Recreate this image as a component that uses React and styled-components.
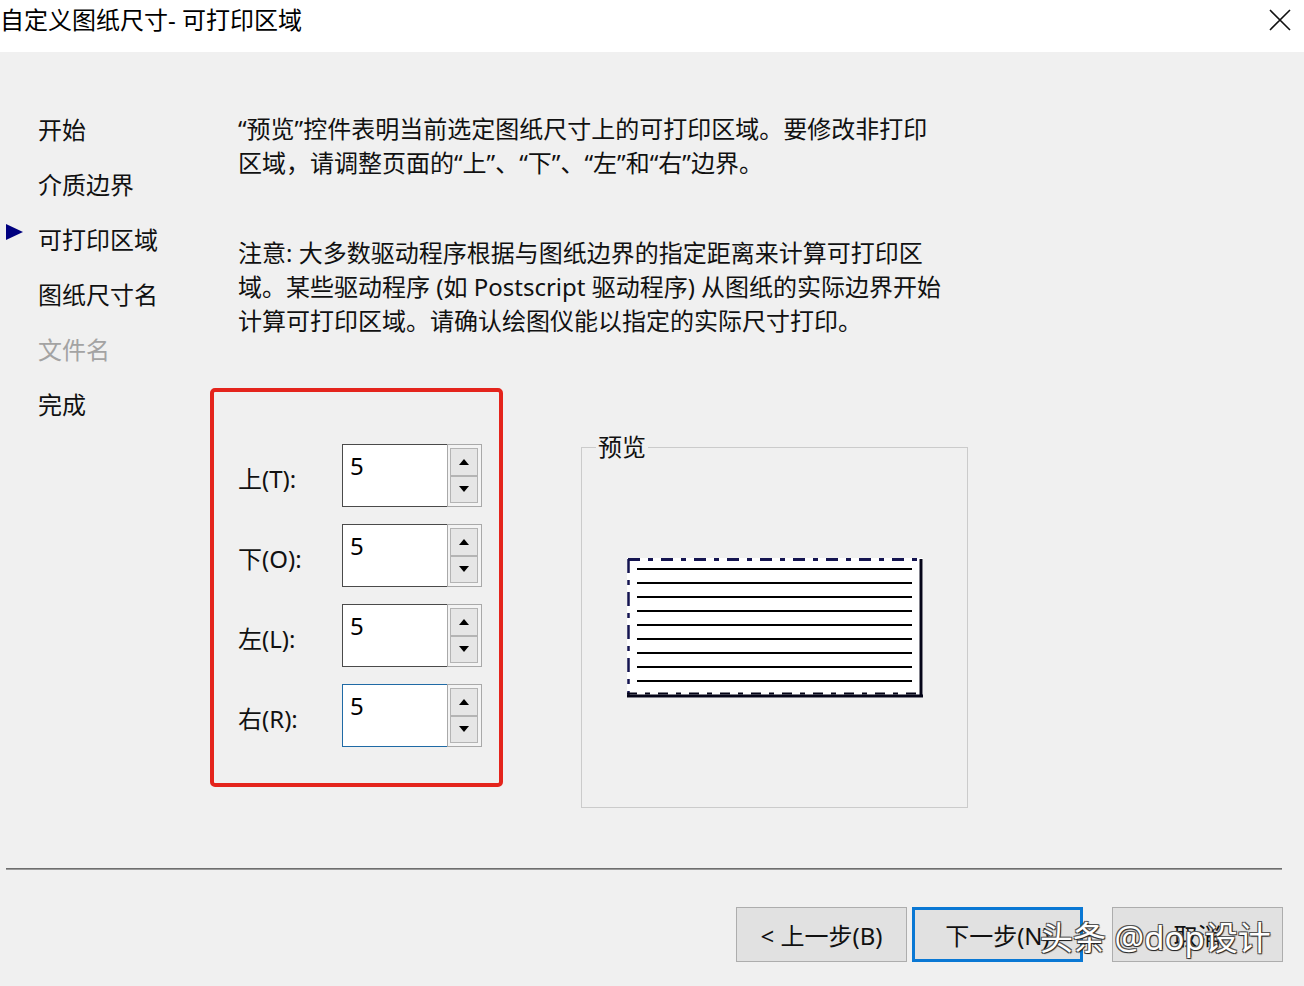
import React from "react";
import styled, { createGlobalStyle } from "styled-components";

const GlobalStyle = createGlobalStyle`
  html, body {
    margin: 0;
    padding: 0;
    background: #f0f0f0;
  }
  * {
    box-sizing: border-box;
  }
`;

const FONT = `"Noto Sans", "Noto Sans CJK SC", sans-serif`;

const steps = [
  { label: "开始" },
  { label: "介质边界" },
  { label: "可打印区域", current: true },
  { label: "图纸尺寸名" },
  { label: "文件名", disabled: true },
  { label: "完成" },
];

const margins = [
  { label: "上(T):", value: "5" },
  { label: "下(O):", value: "5" },
  { label: "左(L):", value: "5" },
  { label: "右(R):", value: "5", focused: true },
];

function PaperPreview() {
  const lines = Array.from({ length: 9 }, (_, i) => 11 + i * 14);
  return (
    <svg width="296" height="140" viewBox="0 0 296 140">
      <rect x="0" y="0" width="296" height="140" fill="#fff" />
      {lines.map((y) => (
        <line key={y} x1="10" x2="285" y1={y} y2={y} stroke="#000" strokeWidth="2" />
      ))}
      <line x1="1" y1="1.5" x2="295" y2="1.5" stroke="#141450" strokeWidth="3" strokeDasharray="12 8 5 8" />
      <line x1="1.5" y1="1" x2="1.5" y2="139" stroke="#141450" strokeWidth="2.5" strokeDasharray="14 7 5 7" />
      <line x1="294" y1="1" x2="294" y2="139" stroke="#050518" strokeWidth="3" />
      <line x1="0" y1="138" x2="296" y2="138" stroke="#050518" strokeWidth="3" />
      <line x1="0" y1="135.5" x2="296" y2="135.5" stroke="#050518" strokeWidth="2" strokeDasharray="10 8 5 8" />
    </svg>
  );
}

function Spinner() {
  return (
    <SpinBox>
      <SpinButton>
        <svg width="10" height="6" viewBox="0 0 10 6">
          <path d="M0 6 L5 0 L10 6 Z" fill="#000" />
        </svg>
      </SpinButton>
      <SpinButton>
        <svg width="10" height="6" viewBox="0 0 10 6">
          <path d="M0 0 L10 0 L5 6 Z" fill="#000" />
        </svg>
      </SpinButton>
    </SpinBox>
  );
}

export default function App() {
  return (
    <>
      <GlobalStyle />
      <Window>
        <TitleBar>
          <Title>自定义图纸尺寸- 可打印区域</Title>
          <CloseButton aria-label="close">
            <svg width="22" height="22" viewBox="0 0 22 22">
              <path d="M1 1 L21 21 M21 1 L1 21" stroke="#111" strokeWidth="1.6" />
            </svg>
          </CloseButton>
        </TitleBar>

        <Main>
          <Nav>
            {steps.map((s) => (
              <NavItem key={s.label} $disabled={s.disabled}>
                <Marker>{s.current && <Arrow />}</Marker>
                {s.label}
              </NavItem>
            ))}
          </Nav>

          <Content>
            <Para>
              “预览”控件表明当前选定图纸尺寸上的可打印区域。要修改非打印
              <br />
              区域，请调整页面的“上”、“下”、“左”和“右”边界。
            </Para>
            <Para $top={56}>
              注意: 大多数驱动程序根据与图纸边界的指定距离来计算可打印区
              <br />
              域。某些驱动程序 (如 Postscript 驱动程序) 从图纸的实际边界开始
              <br />
              计算可打印区域。请确认绘图仪能以指定的实际尺寸打印。
            </Para>

            <Controls>
              <MarginBox>
                {margins.map((m) => (
                  <MarginRow key={m.label}>
                    <MarginLabel>{m.label}</MarginLabel>
                    <Field>
                      <FieldInput $focused={m.focused}>{m.value}</FieldInput>
                      <Spinner />
                    </Field>
                  </MarginRow>
                ))}
              </MarginBox>

              <Preview>
                <Legend>预览</Legend>
                <PreviewArea>
                  <PaperPreview />
                </PreviewArea>
              </Preview>
            </Controls>
          </Content>
        </Main>

        <Separator />

        <Footer>
          <Button>&lt; 上一步(B)</Button>
          <Button $primary>下一步(N)</Button>
          <Button $spaced>取消</Button>
          <Watermark>头条 @dop设计</Watermark>
        </Footer>
      </Window>
    </>
  );
}

const Window = styled.div`
  width: 100%;
  height: 100vh;
  display: flex;
  flex-direction: column;
  font-family: ${FONT};
  color: #111;
  background: #f0f0f0;
  overflow: hidden;
`;

const TitleBar = styled.div`
  height: 52px;
  flex: none;
  background: #fff;
  display: flex;
  align-items: flex-start;
  justify-content: space-between;
`;

const Title = styled.div`
  font-size: 24px;
  line-height: 40px;
  color: #000;
`;

const CloseButton = styled.div`
  width: 22px;
  height: 22px;
  margin: 9px 13px 0 0;
  display: flex;
`;

const Main = styled.div`
  flex: 1;
  display: flex;
  min-height: 0;
`;

const Nav = styled.div`
  width: 210px;
  flex: none;
  padding-top: 50px;
  display: flex;
  flex-direction: column;
`;

const NavItem = styled.div`
  display: flex;
  align-items: flex-start;
  font-size: 24px;
  line-height: 55px;
  height: 55px;
  color: ${(p) => (p.$disabled ? "#a3a3a3" : "#111")};
`;

const Marker = styled.div`
  width: 38px;
  flex: none;
  padding-left: 6px;
  padding-top: 12px;
`;

const Arrow = styled.div`
  width: 0;
  height: 0;
  border-left: 17px solid #00007f;
  border-top: 8px solid transparent;
  border-bottom: 8px solid transparent;
`;

const Content = styled.div`
  flex: 1;
  padding-top: 60px;
  display: flex;
  flex-direction: column;
`;

const Para = styled.p`
  margin: ${(p) => p.$top || 0}px 0 0 28px;
  font-size: 24px;
  line-height: 34px;
  color: #111;
  white-space: nowrap;
`;

const Controls = styled.div`
  display: flex;
  align-items: flex-start;
  margin-top: 50px;
`;

const MarginBox = styled.div`
  width: 293px;
  height: 399px;
  border: 4px solid #e4241c;
  border-radius: 5px;
  padding: 52px 0 0 24px;
  display: flex;
  flex-direction: column;
  gap: 17px;
`;

const MarginRow = styled.div`
  display: flex;
  align-items: center;
  height: 63px;
`;

const MarginLabel = styled.div`
  width: 104px;
  font-size: 24px;
  padding-top: 4px;
`;

const Field = styled.div`
  display: flex;
  height: 63px;
`;

const FieldInput = styled.div`
  width: 105px;
  height: 63px;
  background: #fff;
  border: 1.5px solid ${(p) => (p.$focused ? "#1f6aa5" : "#4a4a4a")};
  border-right: none;
  padding: 4px 0 0 7px;
  font-size: 24px;
  line-height: 34px;
  color: #000;
`;

const SpinBox = styled.div`
  width: 35px;
  height: 63px;
  border: 1px solid #a9a9a9;
  background: #f4f4f4;
  padding: 3px 3px 3px 2px;
  display: flex;
  flex-direction: column;
`;

const SpinButton = styled.div`
  flex: 1;
  background: #e6e6e6;
  border: 1px solid #b4b4b4;
  display: flex;
  align-items: center;
  justify-content: center;
`;

const Preview = styled.fieldset`
  margin: 47px 0 0 78px;
  padding: 0;
  width: 387px;
  border: 1px solid #cbcbcb;
  min-width: 0;
`;

const Legend = styled.legend`
  margin-left: 14px;
  padding: 0 2px;
  font-size: 24px;
  line-height: 24px;
  color: #111;
`;

const PreviewArea = styled.div`
  height: 348px;
  padding-top: 99px;
  display: flex;
  justify-content: center;
  align-items: flex-start;
`;

const Separator = styled.div`
  flex: none;
  height: 2px;
  margin: 0 22px 0 6px;
  background: #6e6e6e;
  border-bottom: 1px solid #9a9a9a;
`;

const Footer = styled.div`
  flex: none;
  height: 116px;
  position: relative;
  display: flex;
  justify-content: flex-end;
  align-items: flex-start;
  padding: 37px 21px 0 0;
`;

const Button = styled.div`
  width: 171px;
  height: 55px;
  margin-left: ${(p) => (p.$spaced ? 29 : 5)}px;
  background: #e1e1e1;
  border: ${(p) => (p.$primary ? "3px solid #0a78d4" : "1px solid #adadad")};
  display: flex;
  align-items: center;
  justify-content: center;
  font-size: 24px;
  color: #111;
`;

const Watermark = styled.div`
  position: absolute;
  left: 1040px;
  top: 48px;
  font-size: 33px;
  line-height: 40px;
  color: #fff;
  white-space: nowrap;
  text-shadow: 1px 1px 1px #222, -1px -1px 0 #555, 1px -1px 0 #555, -1px 1px 0 #555;
`;
